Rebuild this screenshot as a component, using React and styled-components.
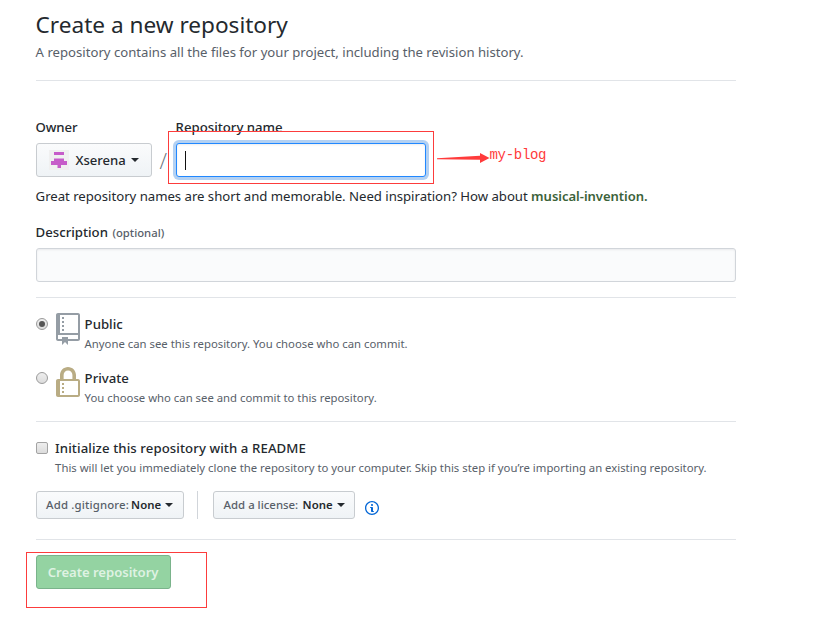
import React from "react";
import styled, { createGlobalStyle, css } from "styled-components";

const Global = createGlobalStyle`
  * { box-sizing: border-box; }
  body { margin: 0; background: #fff; color: #24292e; font: 400 13.2px/20px "Noto Sans", "Open Sans", sans-serif; }
  h1, p { margin: 0; }
`;

const Page = styled.main`
  position: relative;
  width: 840px;
  height: 627px;
  padding: 9px 0 0 35.600px;
  overflow: hidden;
  white-space: nowrap;
`;
const Content = styled.div`width: 700px;`;
const Header = styled.header`
  height: 72px;
  border-bottom: 1px solid #e1e4e8;
`;
const Title = styled.h1`
  font-size: 22.6px;
  font-weight: 400;
  line-height: 32px;
`;
const Subtitle = styled.p`
  margin-top: 1px;
  color: #586069;
  font-size: 13.15px;
`;
const Section = styled.section`
  height: ${(p) => p.$height}px;
  padding-top: ${(p) => p.$top}px;
  border-bottom: 1px solid #e1e4e8;
`;
const Label = styled.label`
  display: block;
  height: 20px;
  font-weight: 500;
  font-size: 13.2px;
  letter-spacing: ${(p) => p.$tracking || 0}px;
`;
const NameRow = styled.div`display: flex;`;
const Field = styled.div`
  display: flex;
  flex-direction: column;
  gap: 6px;
`;
const Slash = styled.span`
  width: 24px;
  padding: 33px 0 0 8px;
  color: #6a737d;
  font-family: "Open Sans", sans-serif;
  font-size: 22px;
  font-weight: 300;
`;
const buttonFace = css`
  display: flex;
  align-items: center;
  border: 1px solid #c8ccd0;
  border-radius: 3px;
  background: linear-gradient(#fafbfc, #eff3f6);
  color: #24292e;
  font-family: inherit;
  font-weight: 500;
`;
const OwnerButton = styled.button`
  ${buttonFace}
  width: 116px;
  height: 34px;
  padding: 0 0 0 12px;
  font-size: 13.1px;
  line-height: 20px;
`;
const OwnerName = styled.span`margin-left: 7px; width: 50px; letter-spacing: -0.05px;`;
const Caret = styled.span`
  margin-left: ${(p) => p.$gap}px;
  border: 4px solid transparent;
  border-top-color: #24292e;
  border-bottom: 0;
`;
const inputFace = css`
  display: block;
  height: 34px;
  border-radius: 3px;
  outline: none;
`;
const NameInput = styled.div`
  ${inputFace}
  width: 250px;
  padding: 8px;
  border: 1px solid #2188ff;
  background: #fff;
  box-shadow: inset 0 1px 2px rgba(27, 31, 35, 0.075), 0 0 0 3px rgba(3, 102, 214, 0.3);
`;
const TextCursor = styled.span`
  display: block;
  width: 1px;
  height: 19px;
  margin-top: -1px;
  background: #111;
`;
const Hint = styled.p`
  margin: 9px 0 16px;
  font-size: 13.2px;
  letter-spacing: -0.03px;
`;
const Suggestion = styled.strong`
  color: #3b6239;
  font-size: 13.05px;
  font-weight: 600;
`;
const Optional = styled.small`
  margin-left: 1px;
  color: #586069;
  font-size: 11.3px;
  font-weight: 500;
`;
const DescriptionInput = styled.input`
  ${inputFace}
  width: 100%;
  margin-top: 6px;
  border: 1px solid #d1d5da;
  background: #fafbfc;
  box-shadow: inset 0 1px 2px rgba(27, 31, 35, 0.075);
`;
const Option = styled.div`
  display: grid;
  grid-template-columns: 20px 29px 1fr;
  height: 54px;
`;
const Radio = styled.span`
  display: flex;
  align-items: center;
  justify-content: center;
  width: 12px;
  height: 12px;
  margin-top: 4px;
  border: 1px solid #9b9b9b;
  border-radius: 50%;
  background: linear-gradient(#eee, #dcdcdc);
  &::after {
    content: "";
    width: 6px;
    height: 6px;
    border-radius: 50%;
    background: ${(p) => (p.$checked ? "#555" : "transparent")};
  }
`;
const Note = styled.p`
  color: #586069;
  font-size: 11.34px;
  line-height: 19px;
`;
const IconSlot = styled.span`
  height: 32px;
  margin-top: -1px;
  svg { display: block; }
`;
const CheckRow = styled.div`
  display: grid;
  grid-template-columns: 19.500px 1fr;
`;
const Checkbox = styled.span`
  width: 12px;
  height: 12px;
  margin-top: 4px;
  border: 1px solid #a3a3a3;
  border-radius: 2px;
  background: linear-gradient(#eee, #dcdcdc);
`;
const Actions = styled.div`
  display: flex;
  margin-top: 14px;
`;
const SmallButton = styled.button`
  ${buttonFace}
  width: ${(p) => p.$width}px;
  height: 28px;
  padding: 0 0 0 ${(p) => p.$inset}px;
  font-size: 11.4px;
  line-height: 20px;
`;
const Muted = styled.span`
  width: ${(p) => p.$width}px;
  color: #586069;
  text-align: left;
  letter-spacing: ${(p) => p.$tracking}px;
`;
const None = styled.span`
  width: 30px;
  font-weight: 600;
  text-align: left;
`;
const Divider = styled.span`
  width: 1px;
  height: 28px;
  margin: 0 15px 0 13px;
  background: #d1d5da;
`;
const InfoSlot = styled.span`
  margin: 9px 0 0 10px;
  height: 14px;
  svg { display: block; }
`;
const SubmitButton = styled.button`
  width: 135px;
  height: 34px;
  margin-top: 15px;
  padding: 0;
  border: 1px solid #7ab38b;
  border-radius: 3px;
  background: #94d3a2;
  color: #dff2e3;
  font: 600 13.15px/20px "Noto Sans", sans-serif;
  letter-spacing: -0.05px;
`;
const Highlight = styled.div`
  position: absolute;
  border: 1px solid #fc3c3c;
  pointer-events: none;
`;
const NameHighlight = styled(Highlight)`
  left: 168px;
  top: 131px;
  width: 266px;
  height: 53px;
`;
const SubmitHighlight = styled(Highlight)`
  left: 26px;
  top: 552px;
  width: 181px;
  height: 56px;
`;
const Callout = styled.div`
  position: absolute;
  left: 437px;
  top: 145px;
  display: flex;
  color: #ff3b3b;
  font: 14px/20px "Liberation Mono", monospace;
  letter-spacing: -0.3px;
  svg { display: block; margin-top: 7px; }
`;

const Avatar = () => (
  <svg width="20" height="20" viewBox="0 0 20 20">
    <path fill="#f0f0f0" d="M0 0h20v20H0z" />
    <path fill="#c65cc9" d="M5 2h10v3H5zM5 8.500h10v2.500h3v4h-6v3H8.500v-3H2v-4h3z" />
  </svg>
);
const RepoIcon = () => (
  <svg width="24" height="32" viewBox="0 0 12 16" fill="#959da5">
    <path d="M4 9H3V8h1v1zm0-3H3v1h1V6zm0-2H3v1h1V4zm0-2H3v1h1V2zm8-1v12c0 .55-.45 1-1 1H6v2l-1.500-1.500L3 16v-2H1c-.55 0-1-.45-1-1V1c0-.55.45-1 1-1h10c.55 0 1 .45 1 1zm-1 10H1v2h2v-1h3v1h5v-2zm0-10H2v9h9V1z" />
  </svg>
);
const LockIcon = () => (
  <svg width="24" height="32" viewBox="0 0 12 16" fill="#b9ac84">
    <path d="M4 13H3v-1h1v1zm8-6v7c0 .55-.45 1-1 1H1c-.55 0-1-.45-1-1V7c0-.55.45-1 1-1h1V4c0-2.200 1.800-4 4-4s4 1.800 4 4v2h1c.55 0 1 .45 1 1zM3.800 6h4.410V4c0-1.220-.98-2.200-2.200-2.200-1.220 0-2.200.98-2.200 2.200v2H3.800zM11 7H2v7h9V7zM4 8H3v1h1V8zm0 2H3v1h1v-1z" />
  </svg>
);
const InfoIcon = () => (
  <svg width="14" height="16" viewBox="0 0 14 16" fill="#0366d6">
    <path fillRule="evenodd" d="M6.300 5.690a.942.942 0 0 1-.28-.7c0-.28.09-.52.28-.7.190-.18.420-.28.7-.28.280 0 .520.090.7.280.180.190.280.420.280.7 0 .280-.090.520-.280.7a1 1 0 0 1-.7.300c-.280 0-.520-.110-.7-.300zM8 7.990c-.020-.250-.110-.480-.310-.690-.200-.190-.420-.300-.690-.310H6c-.270.020-.480.130-.690.310-.200.200-.300.440-.310.690h1v3c.020.270.110.500.310.690.200.200.420.310.690.310h1c.270 0 .480-.110.690-.310.200-.190.300-.420.310-.690H8V7.980v.010zM7 2.300c-3.140 0-5.700 2.540-5.700 5.680 0 3.140 2.560 5.700 5.700 5.700s5.700-2.550 5.700-5.700c0-3.150-2.560-5.690-5.700-5.690v.010zM7 .980c3.860 0 7 3.140 7 7s-3.140 7-7 7-7-3.120-7-7 3.140-7 7-7z" />
  </svg>
);
const Arrow = () => (
  <svg width="52.500" height="12" viewBox="0 0 52.500 12" fill="#ff3b3b">
    <path d="M0 6.200L43 3.800V1L52.500 6L43 11V7.800L0 7.200z" />
  </svg>
);

export default function App() {
  return (
    <Page>
      <Global />
      <Content>
        <Header>
          <Title>Create a new repository</Title>
          <Subtitle>A repository contains all the files for your project, including the revision history.</Subtitle>
        </Header>

        <Section $top={36} $height={217}>
          <NameRow>
            <Field>
              <Label $tracking={-0.1}>Owner</Label>
              <OwnerButton type="button">
                <Avatar />
                <OwnerName>Xserena</OwnerName>
                <Caret $gap={5} />
              </OwnerButton>
            </Field>
            <Slash>/</Slash>
            <Field>
              <Label>Repository name</Label>
              <NameInput role="textbox"><TextCursor /></NameInput>
            </Field>
          </NameRow>
          <Hint>
            Great repository names are short and memorable. Need inspiration? How about{" "}
            <Suggestion>musical-invention.</Suggestion>
          </Hint>
          <Label>Description <Optional>(optional)</Optional></Label>
          <DescriptionInput />
        </Section>

        <Section $top={16} $height={124}>
          <Option>
            <Radio $checked />
            <IconSlot><RepoIcon /></IconSlot>
            <div>
              <Label>Public</Label>
              <Note>Anyone can see this repository. You choose who can commit.</Note>
            </div>
          </Option>
          <Option>
            <Radio />
            <IconSlot><LockIcon /></IconSlot>
            <div>
              <Label>Private</Label>
              <Note>You choose who can see and commit to this repository.</Note>
            </div>
          </Option>
        </Section>

        <Section $top={16} $height={118}>
          <CheckRow>
            <Checkbox />
            <div>
              <Label $tracking={0.09}>Initialize this repository with a README</Label>
              <Note>
                This will let you immediately clone the repository to your computer. Skip this step if you’re importing an existing repository.
              </Note>
            </div>
          </CheckRow>
          <Actions>
            <SmallButton type="button" $width={148} $inset={9.5}>
              <Muted $width={85} $tracking={0.15}>Add .gitignore:</Muted>
              <None>None</None>
              <Caret $gap={4} />
            </SmallButton>
            <Divider />
            <SmallButton type="button" $width={142} $inset={10}>
              <Muted $width={79} $tracking={0}>Add a license:</Muted>
              <None>None</None>
              <Caret $gap={4} />
            </SmallButton>
            <InfoSlot><InfoIcon /></InfoSlot>
          </Actions>
        </Section>

        <SubmitButton type="button">Create repository</SubmitButton>
      </Content>

      <NameHighlight />
      <SubmitHighlight />
      <Callout>
        <Arrow />
        <span>my-blog</span>
      </Callout>
    </Page>
  );
}
